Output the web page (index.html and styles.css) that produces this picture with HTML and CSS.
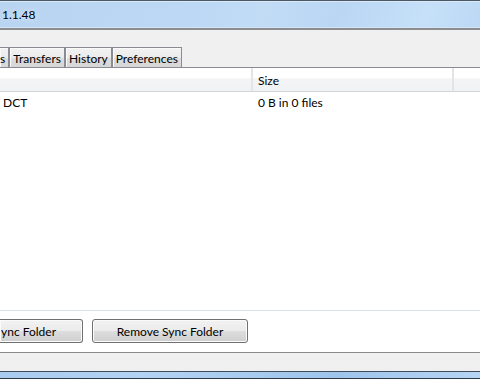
FILE: index.html
```html
<!DOCTYPE html>
<html lang="en">
<head>
    <meta charset="UTF-8">
    <meta name="viewport" content="width=device-width, initial-scale=1.0">
    <title>BitTorrent Sync</title>
    <link rel="stylesheet" href="styles.css">
</head>
<body>
    <div class="window">
        <div class="titlebar">
            <span class="title">1.1.48</span>
        </div>
        <div class="menubar"></div>

        <div class="tabs">
            <div class="tab tab-cut">s</div>
            <div class="tab">Transfers</div>
            <div class="tab">History</div>
            <div class="tab">Preferences</div>
            <div class="tab-line"></div>
        </div>

        <div class="page">
            <div class="listview">
                <div class="lv-header">
                    <div class="col col-name"></div>
                    <div class="col col-size">Size</div>
                    <div class="col col-rest"></div>
                </div>
                <div class="lv-body">
                    <div class="lv-row">
                        <div class="cell col-name">DCT</div>
                        <div class="cell col-size">0 B in 0 files</div>
                    </div>
                </div>
            </div>
            <div class="buttons">
                <button class="btn btn-cut">ync Folder</button>
                <button class="btn">Remove Sync Folder</button>
            </div>
        </div>

        <div class="statusbar"></div>
        <div class="frame-bottom"></div>
    </div>
</body>
</html>
```

FILE: styles.css
```css
body {
    margin: 0;
    padding: 0;
    font-family: Lato, "Liberation Sans", Arial, sans-serif;
    font-size: 12px;
    color: #000;
    background-color: #f0f0f0;
    overflow: hidden;
}

.window {
    width: 480px;
    height: 379px;
    display: flex;
    flex-direction: column;
}

/* title bar */
.titlebar {
    height: 27px;
    border-top: 1px solid #4b5868;
    border-bottom: 2px solid #8b8d90;
    box-shadow: inset 0 1px 0 #dbe9f7, inset 0 -1px 0 #d4e4f4;
    background: linear-gradient(110deg, #b8d4f1 0%, #bcd8f4 40%, #c2dcf6 55%, #b9d6f3 70%, #c6e0f9 88%, #bcd8f4 100%);
    display: flex;
    align-items: center;
    padding-left: 2px;
}

.title {
    text-shadow: 0 0 6px rgba(255, 255, 255, 0.9);
}

.menubar {
    height: 17px;
}

/* tabs */
.tabs {
    display: flex;
    height: 21px;
}

.tab {
    height: 19px;
    line-height: 21px;
    padding: 0 3px;
    border: 1px solid #898c95;
    box-shadow: inset 1px 1px 0 #fafafa;
    background: linear-gradient(#f2f2f2, #ebebeb 50%, #dedede 51%, #d6d6d6);
}

.tab-cut {
    border-left: none;
    padding-left: 0;
    padding-right: 3px;
}

.tab-line {
    flex: 1;
    border-bottom: 1px solid #898c95;
}

/* tab page */
.page {
    height: 284px;
    background-color: #fff;
    border-bottom: 1px solid #8a8a8a;
    display: flex;
    flex-direction: column;
}

.listview {
    height: 242px;
    border-bottom: 1px solid #d9e2ea;
    display: flex;
    flex-direction: column;
}

.lv-header {
    display: flex;
    height: 23px;
    border-bottom: 1px solid #d5d5d5;
    background: linear-gradient(#ffffff 0%, #ffffff 45%, #f3f4f6 46%, #f1f2f4 100%);
}

.col {
    height: 23px;
    line-height: 26px;
    border-right: 2px solid #e3e4e6;
}

.col-name {
    width: 248px;
    padding-left: 3px;
}

.col-size {
    width: 194px;
    padding-left: 5px;
}

.col-rest {
    flex: 1;
    border-right: none;
}

.lv-body {
    flex: 1;
}

.lv-row {
    display: flex;
    height: 20px;
    line-height: 21px;
}

.cell.col-name {
    width: 250px;
}

/* buttons */
.buttons {
    display: flex;
    gap: 10px;
    padding-top: 8px;
}

.btn {
    height: 24px;
    font-family: Lato, "Liberation Sans", Arial, sans-serif;
    font-size: 12px;
    color: #000;
    border: 1px solid #707070;
    border-radius: 3px;
    box-shadow: inset 0 0 0 1px #fbfbfb;
    background: linear-gradient(#f2f2f2, #ebebeb 50%, #dddddd 51%, #cfcfcf);
    padding: 0;
    width: 156px;
}

.btn-cut {
    width: 83px;
    border-left: none;
    border-top-left-radius: 0;
    border-bottom-left-radius: 0;
    padding-left: 1px;
    margin-right: -1px;
    text-align: left;
}

.statusbar {
    height: 18px;
}

.frame-bottom {
    height: 6px;
    border-top: 1px solid #3f4c5b;
    border-bottom: 1px solid #2e3a47;
    background: linear-gradient(100deg, #a9cbef 0%, #b3d3f3 30%, #9fc4eb 70%, #b7d5f4 100%);
}
```
